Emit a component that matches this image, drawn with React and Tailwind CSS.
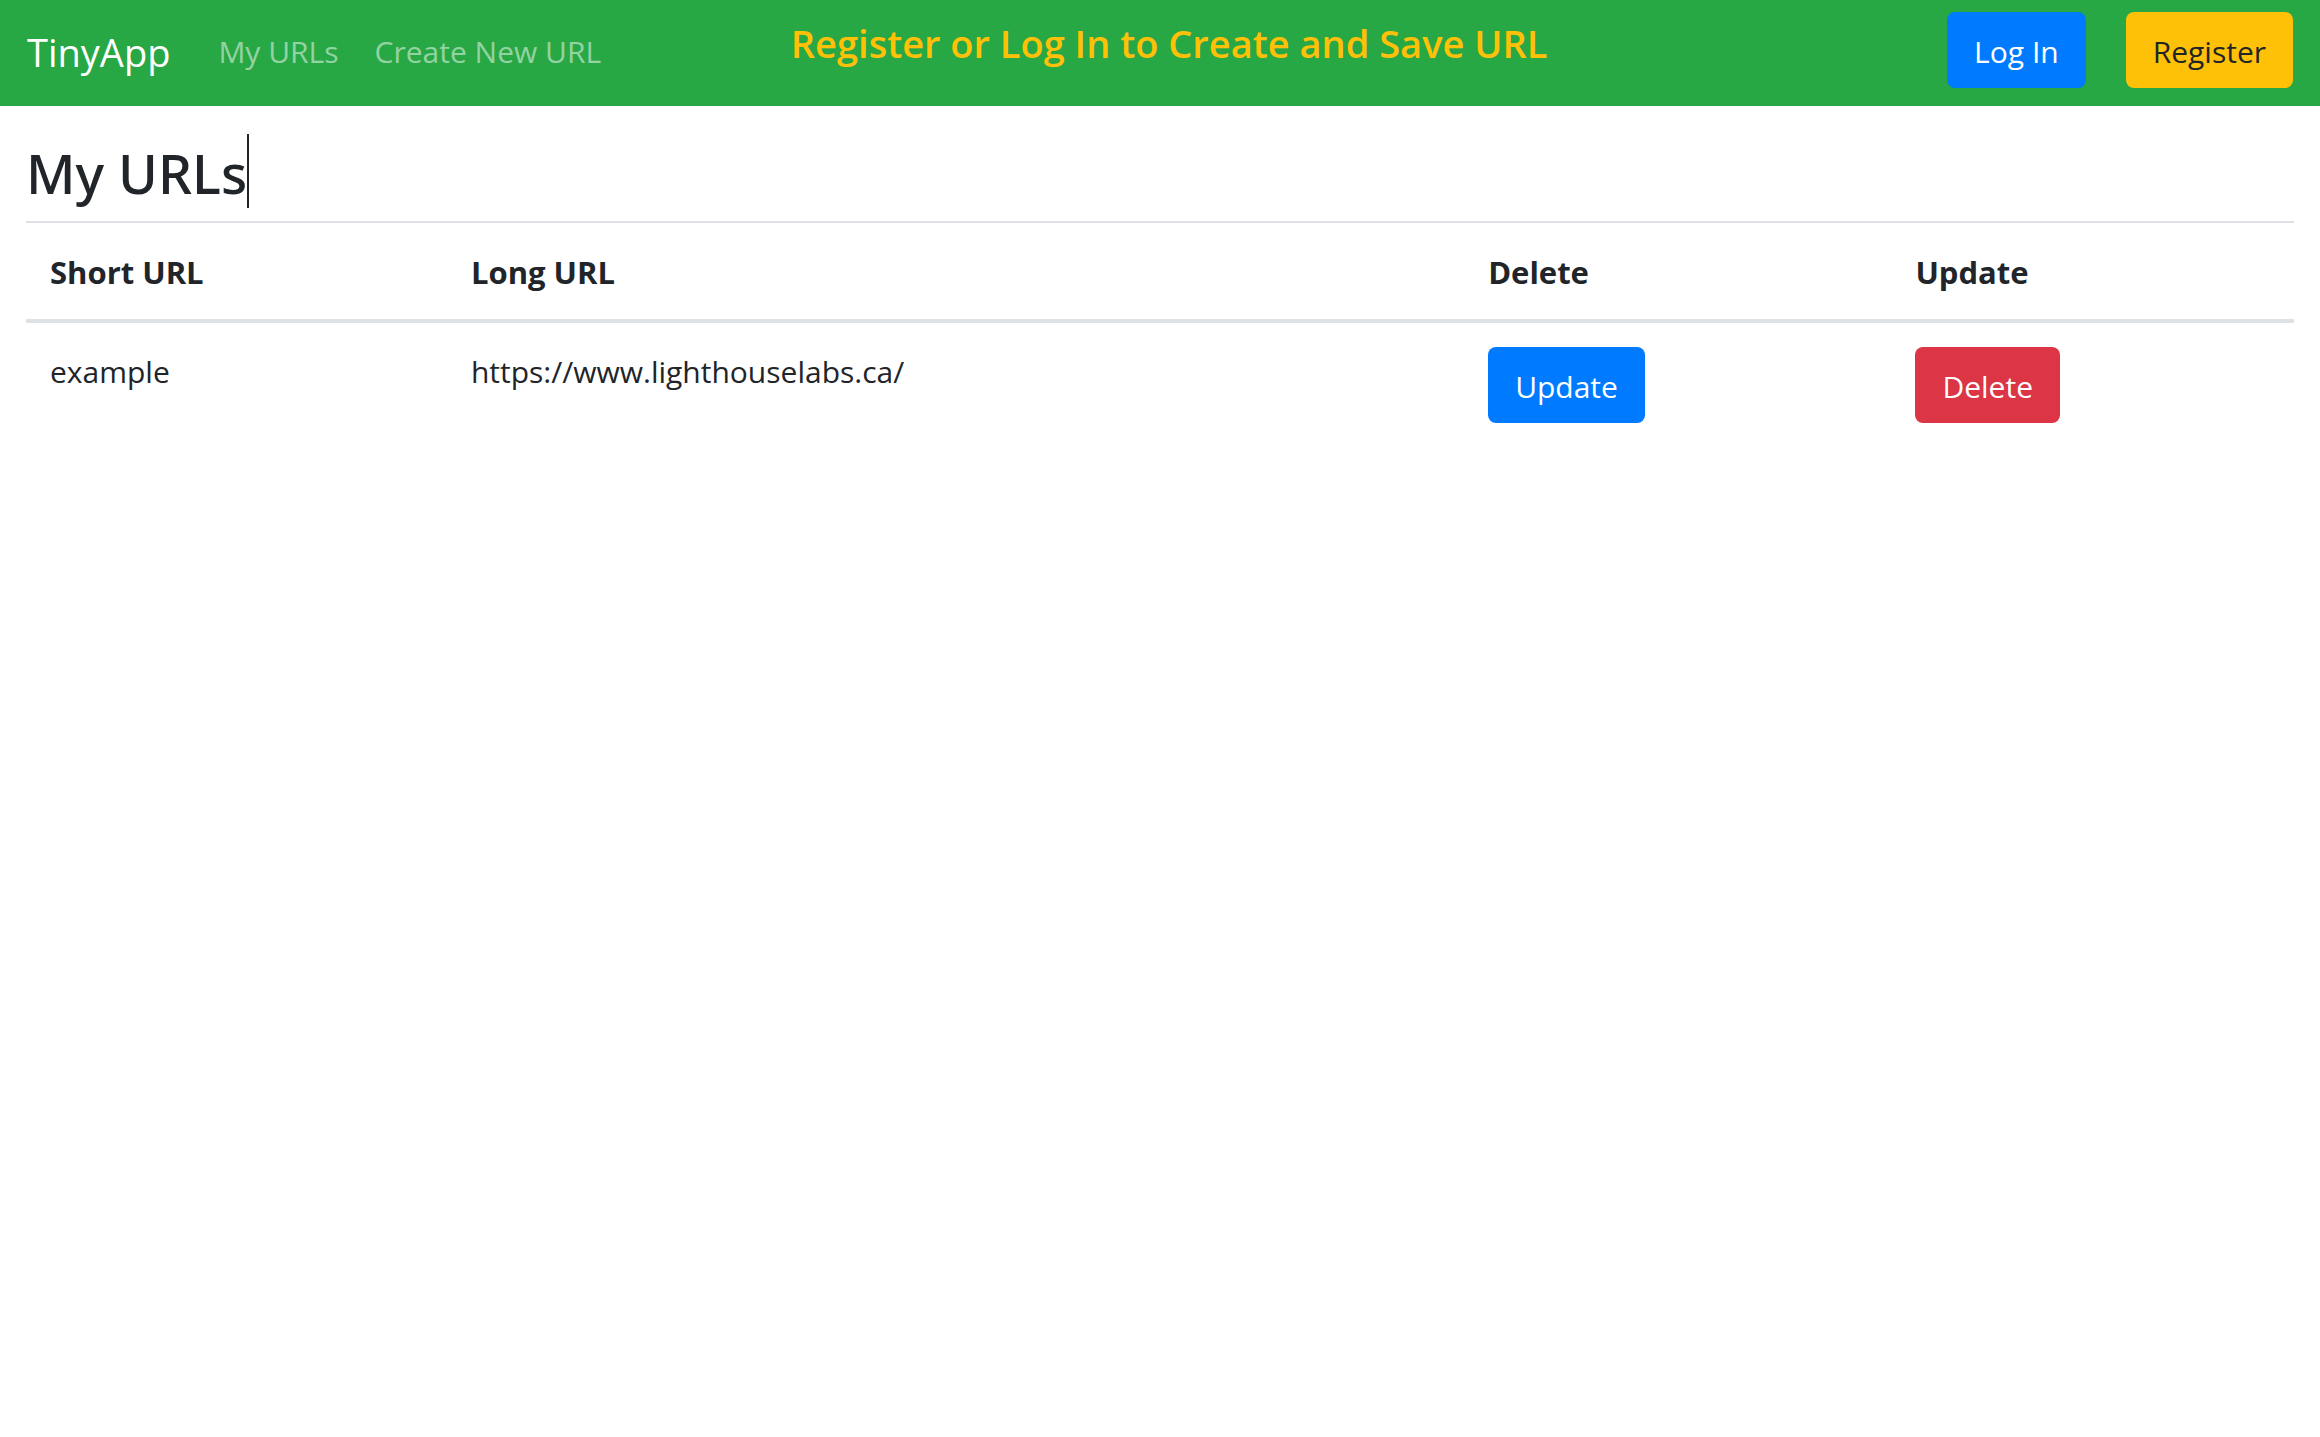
const urls = [{ id: "example", long: "https://www.lighthouselabs.ca/" }];

const columns = [
  { label: "Short URL", width: "w-[18.56%]" },
  { label: "Long URL", width: "w-[44.85%]" },
  { label: "Delete", width: "w-[18.84%]" },
  { label: "Update", width: "w-[17.75%]" },
];

function Button({ className, children }) {
  return (
    <button type="button" className={"cursor-pointer rounded-lg px-[27px] pt-4 pb-3 leading-[48px] " + className}>
      {children}
    </button>
  );
}

export default function App() {
  return (
    <div className="min-h-screen bg-white font-['Open_Sans',sans-serif] text-[30px] leading-[50px] text-[#212529]">
      <header className="flex items-start bg-[#28a745] px-[27px] pt-3 pb-[18px] whitespace-nowrap">
        <nav className="flex items-center pt-4 leading-[48px]">
          <a href="#" className="mr-12 text-[38px] text-white">TinyApp</a>
          <a href="#" className="mr-9 text-white/50">My URLs</a>
          <a href="#" className="text-white/50">Create New URL</a>
        </nav>
        <p className="flex-1 pt-[6px] pr-[210px] text-center text-[38px] leading-[50px] font-semibold text-[#ffc107]">
          Register or Log In to Create and Save URL
        </p>
        <div className="flex gap-10">
          <Button className="bg-[#007bff] text-white">Log In</Button>
          <Button className="bg-[#ffc107]">Register</Button>
        </div>
      </header>
      <main className="px-[26px] pt-7">
        <h1 className="mb-[13px] w-fit border-r-2 border-[#212529] pt-1 font-['Noto_Sans',sans-serif] text-[54px] leading-[70px] font-medium">
          My URLs
        </h1>
        <table className="w-full table-fixed text-left">
          <thead className="text-[31px]">
            <tr className="border-t-2 border-b-4 border-[#dee2e6]">
              {columns.map((c) => (
                <th key={c.label} scope="col" className={"px-6 pt-6 pb-[22px] font-bold " + c.width}>{c.label}</th>
              ))}
            </tr>
          </thead>
          <tbody>
            {urls.map((u) => (
              <tr key={u.id} className="align-top">
                <td className="p-6">{u.id}</td>
                <td className="p-6">{u.long}</td>
                <td className="p-6"><Button className="bg-[#007bff] text-white">Update</Button></td>
                <td className="p-6"><Button className="bg-[#dc3545] text-white">Delete</Button></td>
              </tr>
            ))}
          </tbody>
        </table>
      </main>
    </div>
  );
}
